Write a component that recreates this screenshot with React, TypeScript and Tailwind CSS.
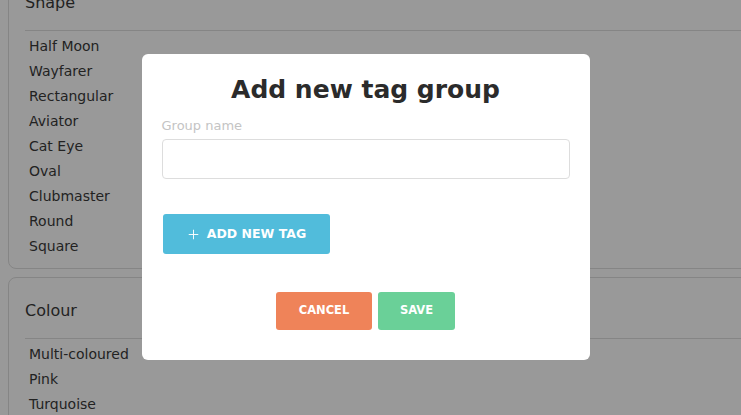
import { Plus } from 'lucide-react';

const shapes = ['Half Moon', 'Wayfarer', 'Rectangular', 'Aviator', 'Cat Eye', 'Oval', 'Clubmaster', 'Round', 'Square'];
const colours = ['Multi-coloured', 'Pink', 'Turquoise'];

function FilterCard({ title, items }: { title: string; items: string[] }) {
    return (
        <div className="mr-[-40px] ml-[8px] rounded-[8px] border border-[#dedede] bg-white">
            <div className="mx-4 border-b border-[#dedede] pt-[21px] pb-[15px] text-[16px] leading-[24px] text-[#3a3a3a]">
                {title}
            </div>
            <ul className="px-5 pt-[3px] pb-[9px] text-[14px] text-[#3a3a3a]">
                {items.map((item) => (
                    <li key={item} className="h-[25px] leading-[25px]">
                        {item}
                    </li>
                ))}
            </ul>
        </div>
    );
}

export default function App() {
    return (
        <div className="relative h-[415px] w-full overflow-hidden bg-white font-['DejaVu_Sans',sans-serif]">
            <div className="-mt-[31px] flex flex-col gap-[8px]">
                <FilterCard title="Shape" items={shapes} />
                <FilterCard title="Colour" items={colours} />
            </div>

            <div className="absolute inset-0 flex items-start justify-center bg-black/40 pt-[54px] pr-[10px]">
                <div className="w-[448px] rounded-[6px] bg-white px-5 pt-[18px] pb-[30px]">
                    <h2 className="text-center text-[25px] leading-[36px] font-bold text-[#2b2b2b]">
                        Add new tag group
                    </h2>
                    <label className="mt-[9px] block text-[13px] leading-[18px] font-normal text-[#c4c4c4]">
                        Group name
                    </label>
                    <input
                        type="text"
                        className="mt-[4px] block h-[40px] w-full rounded-[4px] border border-[#dddddd] px-3 outline-none"
                    />
                    <button className="mt-[35px] ml-px flex h-[40px] w-[167px] items-center justify-center gap-[6px] rounded-[3px] bg-[#51bcdb] text-[12.5px] font-bold text-white">
                        <Plus size={15} strokeWidth={1.5} />
                        ADD NEW TAG
                    </button>
                    <div className="mt-[38px] flex justify-center gap-[6px]">
                        <button className="h-[38px] w-[96px] rounded-[3px] bg-[#ef8359] text-[11.5px] font-bold text-white">
                            CANCEL
                        </button>
                        <button className="h-[38px] w-[77px] rounded-[3px] bg-[#6ad098] text-[11.5px] font-bold text-white">
                            SAVE
                        </button>
                    </div>
                </div>
            </div>
        </div>
    );
}
